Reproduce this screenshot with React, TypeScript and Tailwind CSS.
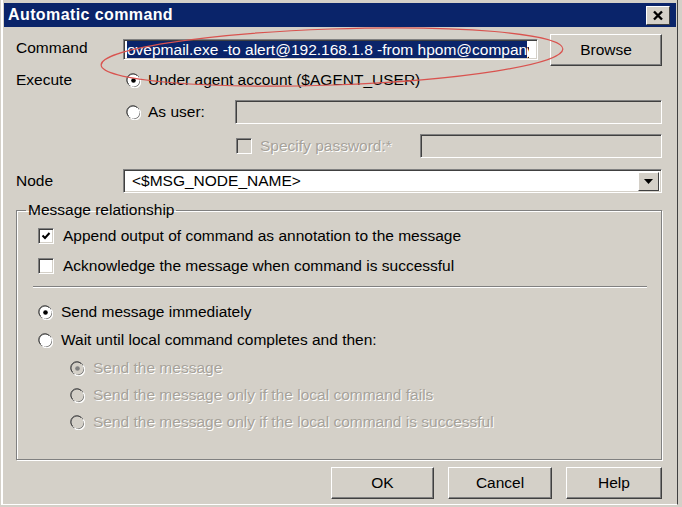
import React from 'react';

const font = { fontFamily: '"Liberation Sans", Arial, sans-serif' };

function Radio({ checked, disabled }: { checked?: boolean; disabled?: boolean }) {
  return (
    <span className="relative inline-block w-[15px] h-[15px] shrink-0">
      <svg width="15" height="15" viewBox="0 0 15 15">
        <circle cx="7.5" cy="7.5" r="6.5" fill={disabled ? '#d4d0c8' : '#fff'} stroke="#808080" strokeWidth="1" />
        <path d="M2.5 11 A6 6 0 0 1 11 2.5" fill="none" stroke="#404040" strokeWidth="1" />
        <path d="M4.5 13 A6 6 0 0 0 13 4.5" fill="none" stroke="#fff" strokeWidth="1.2" />
        {checked && <circle cx="7.5" cy="7.5" r="2.3" fill={disabled ? '#808080' : '#000'} />}
      </svg>
    </span>
  );
}

function Check({ checked, disabled }: { checked?: boolean; disabled?: boolean }) {
  return (
    <span
      className={`inline-flex items-center justify-center w-[16px] h-[16px] shrink-0 border border-t-[#808080] border-l-[#808080] border-r-white border-b-white shadow-[inset_1px_1px_0_#404040,inset_-1px_-1px_0_#d4d0c8] ${disabled ? 'bg-[#d4d0c8]' : 'bg-white'}`}
    >
      {checked && (
        <svg width="10" height="10" viewBox="0 0 10 10">
          <path d="M1.5 4.5 L4 7 L8.5 2" fill="none" stroke="#000" strokeWidth="2" />
        </svg>
      )}
    </span>
  );
}

function Button({ label, w }: { label: string; w: string }) {
  return (
    <div
      className={`${w} h-[32px] flex items-center justify-center border border-t-white border-l-white border-r-[#404040] border-b-[#404040] shadow-[inset_-1px_-1px_0_#808080] text-[15.5px] text-black`}
    >
      {label}
    </div>
  );
}

const sunken =
  'border border-t-[#808080] border-l-[#808080] border-r-white border-b-white shadow-[inset_1px_1px_0_#404040,inset_-1px_-1px_0_#d4d0c8]';

const disabledText = 'text-[#a6a29a] [text-shadow:1px_1px_0_#fff]';

export default function App() {
  return (
    <div className="w-[682px] h-[507px] bg-[#d4d0c8] overflow-hidden" style={font}>
      <div className="relative ml-[1px] w-[677px] h-[505px] border-l-2 border-l-white border-r border-r-[#404040] border-b border-b-white pt-[3px] pl-[1px] pr-[1px]">
        {/* title bar */}
        <div className="h-[24px] bg-[#0a246a] flex items-center justify-between pl-[4px] pr-[6px]">
          <span className="text-white font-bold text-[16px] tracking-[0.4px]">Automatic command</span>
          <div className="w-[24px] h-[19px] bg-[#d4d0c8] border border-t-white border-l-white border-r-[#404040] border-b-[#404040] flex items-center justify-center">
            <svg width="12" height="11" viewBox="0 0 12 11">
              <path d="M2 1.5 L10 9.5 M10 1.5 L2 9.5" stroke="#000" strokeWidth="2.4" />
            </svg>
          </div>
        </div>

        <div className="pl-[12px] pr-[14px] text-[15.5px] text-black">
          {/* Command */}
          <div className="mt-[10px] h-[25px] flex items-center">
            <span className="w-[107px] pb-[4px]">Command</span>
            <div className={`w-[415px] h-[21px] bg-white ${sunken} flex items-center pl-[3px] pr-[8px]`}>
              <div className="flex-1 overflow-hidden whitespace-nowrap">
                <span className="bg-[#0a246a] text-white leading-[17px]">ovepmail.exe -to alert@192.168.1.8 -from hpom@compan</span>
                <span className="leading-[17px]">y</span>
              </div>
            </div>
            <div className="ml-[12px]">
              <Button label="Browse" w="w-[112px]" />
            </div>
          </div>

          {/* Execute */}
          <div className="mt-[7px] h-[22px] flex items-center">
            <span className="w-[110px]">Execute</span>
            <Radio checked />
            <span className="ml-[7px]">Under agent account ($AGENT_USER)</span>
          </div>

          {/* As user */}
          <div className="mt-[9px] h-[24px] flex items-center">
            <span className="w-[110px]" />
            <Radio />
            <span className="ml-[7px] w-[87px]">As user:</span>
            <div className={`flex-1 h-[24px] bg-[#d4d0c8] ${sunken}`} />
          </div>

          {/* Specify password */}
          <div className="mt-[10px] h-[24px] flex items-center">
            <span className="w-[220px]" />
            <Check disabled />
            <span className={`ml-[8px] w-[160px] ${disabledText}`}>Specify password:*</span>
            <div className={`flex-1 h-[24px] bg-[#d4d0c8] ${sunken}`} />
          </div>

          {/* Node */}
          <div className="mt-[11px] h-[24px] flex items-center">
            <span className="w-[107px]">Node</span>
            <div className={`flex-1 h-[24px] bg-white ${sunken} flex items-center pl-[8px] pr-[2px]`}>
              <span className="flex-1">&lt;$MSG_NODE_NAME&gt;</span>
              <div className="w-[21px] h-[19px] bg-[#d4d0c8] border border-t-white border-l-white border-r-[#404040] border-b-[#404040] flex items-center justify-center">
                <svg width="9" height="5" viewBox="0 0 9 5">
                  <path d="M0 0 H9 L4.5 5 Z" fill="#000" />
                </svg>
              </div>
            </div>
          </div>

          {/* group */}
          <fieldset className="mt-[8px] h-[259px] border border-[#808080] shadow-[1px_1px_0_#fff,inset_1px_1px_0_#fff] pl-[21px] pr-[14px]">
            <legend className="ml-[-12px] px-[2px] leading-[18px]">Message relationship</legend>
            <div className="mt-[6px] h-[22px] flex items-center">
              <Check checked />
              <span className="ml-[9px]">Append output of command as annotation to the message</span>
            </div>
            <div className="mt-[8px] h-[22px] flex items-center">
              <Check />
              <span className="ml-[9px]">Acknowledge the message when command is successful</span>
            </div>
            <div className="mt-[9px] h-[2px] border-t border-t-[#808080] border-b border-b-white ml-[-5px]" />
            <div className="mt-[13px] h-[22px] flex items-center">
              <Radio checked />
              <span className="ml-[8px]">Send message immediately</span>
            </div>
            <div className="mt-[6px] h-[22px] flex items-center">
              <Radio />
              <span className="ml-[8px]">Wait until local command completes and then:</span>
            </div>
            <div className="pl-[32px]">
              <div className="mt-[6px] h-[22px] flex items-center">
                <Radio checked disabled />
                <span className={`ml-[8px] ${disabledText}`}>Send the message</span>
              </div>
              <div className="mt-[5px] h-[22px] flex items-center">
                <Radio disabled />
                <span className={`ml-[8px] ${disabledText}`}>Send the message only if the local command fails</span>
              </div>
              <div className="mt-[5px] h-[22px] flex items-center">
                <Radio disabled />
                <span className={`ml-[8px] ${disabledText}`}>Send the message only if the local command is successful</span>
              </div>
            </div>
          </fieldset>

          {/* buttons */}
          <div className="mt-[7px] flex justify-end gap-[14px]">
            <Button label="OK" w="w-[103px]" />
            <Button label="Cancel" w="w-[104px]" />
            <Button label="Help" w="w-[96px]" />
          </div>
        </div>

        {/* red annotation ellipse */}
        <svg className="absolute left-0 top-0 pointer-events-none" width="677" height="120" viewBox="0 0 677 120">
          <ellipse cx="329" cy="57" rx="231" ry="28" fill="none" stroke="#d9534f" strokeWidth="1.2" transform="rotate(-2 329 57)" />
        </svg>
      </div>
    </div>
  );
}
